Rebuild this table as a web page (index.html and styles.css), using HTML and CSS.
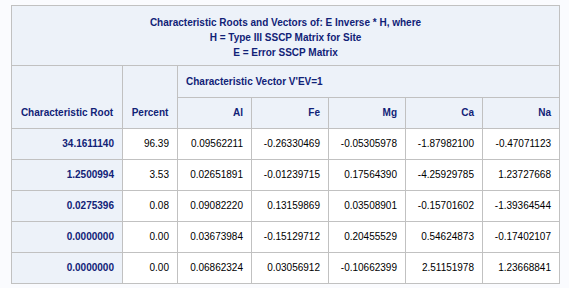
FILE: index.html
```html
<!DOCTYPE html>
<html>
<head>
<meta charset="utf-8">
<link rel="stylesheet" href="styles.css">
</head>
<body>
<table class="tbl">
  <colgroup>
    <col class="c-root"><col class="c-pct"><col class="c-v"><col class="c-v"><col class="c-v"><col class="c-v"><col class="c-v">
  </colgroup>
  <thead>
    <tr>
      <th class="title" colspan="7">Characteristic Roots and Vectors of: E Inverse * H, where<br>H = Type III SSCP Matrix for Site<br>E = Error SSCP Matrix</th>
    </tr>
    <tr>
      <th class="hc" rowspan="2">Characteristic Root</th>
      <th class="hc" rowspan="2">Percent</th>
      <th class="hl" colspan="5">Characteristic Vector V'EV=1</th>
    </tr>
    <tr>
      <th class="hr">Al</th>
      <th class="hr">Fe</th>
      <th class="hr">Mg</th>
      <th class="hr">Ca</th>
      <th class="hr">Na</th>
    </tr>
  </thead>
  <tbody>
    <tr><th class="rh">34.1611140</th><td>96.39</td><td>0.09562211</td><td>-0.26330469</td><td>-0.05305978</td><td>-1.87982100</td><td>-0.47071123</td></tr>
    <tr><th class="rh">1.2500994</th><td>3.53</td><td>0.02651891</td><td>-0.01239715</td><td>0.17564390</td><td>-4.25929785</td><td>1.23727668</td></tr>
    <tr><th class="rh">0.0275396</th><td>0.08</td><td>0.09082220</td><td>0.13159869</td><td>0.03508901</td><td>-0.15701602</td><td>-1.39364544</td></tr>
    <tr><th class="rh">0.0000000</th><td>0.00</td><td>0.03673984</td><td>-0.15129712</td><td>0.20455529</td><td>0.54624873</td><td>-0.17402107</td></tr>
    <tr><th class="rh">0.0000000</th><td>0.00</td><td>0.06862324</td><td>0.03056912</td><td>-0.10662399</td><td>2.51151978</td><td>1.23668841</td></tr>
  </tbody>
</table>
</body>
</html>
```
FILE: styles.css
```css
html, body {
  margin: 0;
  background: #fafbfe;
}
body {
  padding: 5px 0 0 11px;
  font-family: "Liberation Sans", Arial, sans-serif;
  font-size: 10px;
}
.tbl {
  border-collapse: collapse;
  table-layout: fixed;
  width: 549px;
  border: 1px solid #c1c1c1;
}
.c-root { width: 111px; }
.c-pct { width: 55px; }
.c-v { width: 77px; }
.tbl col:nth-child(3) { width: 74px; }
.tbl th, .tbl td {
  border: 1px solid #c1c1c1;
  padding: 0 8px;
  line-height: 12px;
  height: 30px;
  box-sizing: border-box;
}
.tbl th {
  background: #edf2f9;
  color: #112277;
  font-weight: bold;
}
.tbl .title {
  height: 60px;
  line-height: 15px;
  text-align: center;
  vertical-align: middle;
  padding-top: 4px;
}
.tbl .hc {
  text-align: center;
  vertical-align: bottom;
  padding-bottom: 9px;
}
.tbl .hl {
  text-align: left;
  vertical-align: middle;
  height: 32px;
}
.tbl .hr {
  text-align: right;
  vertical-align: middle;
  height: 31px;
}
.tbl .rh {
  text-align: right;
}
.tbl td {
  background: #ffffff;
  color: #000000;
  text-align: right;
  height: 31px;
}
```
